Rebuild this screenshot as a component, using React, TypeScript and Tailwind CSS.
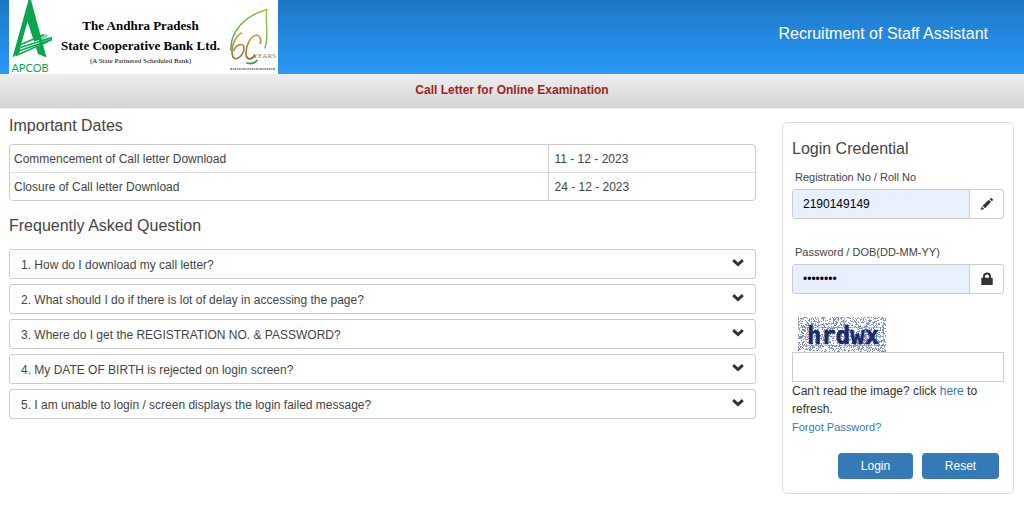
import { useState, type FormEvent, type ReactNode } from "react";

const importantDates = [
  { label: "Commencement of Call letter Download", date: "11 - 12 - 2023" },
  { label: "Closure of Call letter Download", date: "24 - 12 - 2023" },
];

const questions = [
  "1. How do I download my call letter?",
  "2. What should I do if there is lot of delay in accessing the page?",
  "3. Where do I get the REGISTRATION NO. & PASSWORD?",
  "4. My DATE OF BIRTH is rejected on login screen?",
  "5. I am unable to login / screen displays the login failed message?",
];

export default function App() {
  return (
    <div className="min-h-screen bg-white font-['Liberation_Sans',Arial,sans-serif] text-[12px] leading-[18px] text-[#444]">
      <Header />
      <div className="border-b border-[#f0f0f0] bg-linear-to-b from-[#eeeeee] to-[#d5d5d5] px-4 pt-[7px] pb-[9px] text-center">
        <h1 className="font-bold text-[#a02323]">Call Letter for Online Examination</h1>
      </div>
      <main className="flex items-start gap-[26px] pr-[10px] pl-[9px]">
        <div className="min-w-0 flex-1">
          <ImportantDates />
          <Faq />
        </div>
        <LoginPanel />
      </main>
    </div>
  );
}

function Header() {
  return (
    <header className="flex items-center justify-between bg-linear-to-b from-[#1e78c4] to-[#2999fa] pr-9 pl-[9px]">
      <div className="flex h-[74px] w-[269px] items-start bg-white">
        <Emblem />
        <div className="flex flex-1 flex-col items-center pt-4 font-['Liberation_Serif',serif] whitespace-nowrap text-black">
          <span className="text-[13px] leading-5 font-bold">The Andhra Pradesh</span>
          <span className="text-[13px] leading-5 font-bold">State Cooperative Bank Ltd.</span>
          <span className="text-[7px] leading-[10px]">(A State Partnered Scheduled Bank)</span>
        </div>
        <SixtyYears />
      </div>
      <p className="pb-1.5 text-[16px] leading-5 text-white">Recruitment of Staff Assistant</p>
    </header>
  );
}

function Emblem() {
  return (
    <svg className="h-[74px] w-[46px] shrink-0" viewBox="0 0 46 74" role="img" aria-label="APCOB">
      <path d="M19.500 0 H22 L37.500 57.500 L29 54 L18.500 21.500 L12 45 L10.500 53 L3.500 57.500 Z" fill="#0ba551" />
      <path d="M12 46 L30 40 L31 46 L11 53.500 Z" fill="#fff" />
      <g stroke="#0ba551" strokeWidth="1.400">
        <path d="M12 44.500 L35 34.500" />
        <path d="M11.500 47.500 L43 37.500" />
        <path d="M11 50.500 L43 39.500" />
        <path d="M7 55.500 L39 41.500" />
      </g>
      <path d="M31 36 L38 34 V37 L32 39.500 Z M31 39.500 L43 37 V40.500 L33 45 Z" fill="#0ba551" opacity="0.5" />
      <text
        x="21"
        y="72"
        textAnchor="middle"
        fontFamily="Lato, sans-serif"
        fontSize="11"
        fill="#0ba551"
      >
        APCOB
      </text>
    </svg>
  );
}

function SixtyYears() {
  return (
    <svg className="h-[74px] w-[52px] shrink-0" viewBox="0 0 52 74" role="img" aria-label="60 years">
      <defs>
        <linearGradient id="leaf" gradientUnits="userSpaceOnUse" x1="5" y1="60" x2="41" y2="10">
          <stop offset="0" stopColor="#2f9a5c" />
          <stop offset="1" stopColor="#9cc53c" />
        </linearGradient>
        <linearGradient id="gold" gradientUnits="userSpaceOnUse" x1="0" y1="32" x2="0" y2="60">
          <stop offset="0" stopColor="#d9a441" />
          <stop offset="1" stopColor="#8f6a34" />
        </linearGradient>
      </defs>
      <g fill="none" stroke="url(#leaf)" strokeLinecap="round">
        <path d="M5 50 C4 32 18 16 41 9.500" strokeWidth="1.400" />
        <path d="M41 9.500 C38 21 44 32 39 48" strokeWidth="1.300" />
        <path d="M21 63 C25 64 29 63 31 60.500" strokeWidth="1.800" />
      </g>
      <g fill="none" stroke="url(#gold)">
        <path d="M16 32.500 C8 37 4 50 7 57 C10 62 18 55 18 48 C18 43 11 43 7.500 51" strokeWidth="1.600" />
        <path d="M34 44 C36 39 33 34 29 35.500 C24 37 20 46 20 53 C20 60 25 61 29 55" strokeWidth="1.700" />
      </g>
      <text x="27" y="58" fontFamily="Liberation Serif, serif" fontSize="7" fill="#8a7a55">
        YEARS
      </text>
      <path d="M4 69 H49" stroke="#777" strokeWidth="1.600" strokeDasharray="2 0.600 1.200 0.500" />
    </svg>
  );
}

function SectionTitle({ children }: { children: ReactNode }) {
  return <h2 className="text-[16px] leading-[18px]">{children}</h2>;
}

function ImportantDates() {
  return (
    <section className="pt-2">
      <SectionTitle>Important Dates</SectionTitle>
      <div className="mt-[9px] overflow-hidden rounded border border-[#ccc]">
        <table className="w-full border-collapse">
          <tbody>
            {importantDates.map(({ label, date }) => (
              <tr key={label} className="border-t border-[#ddd] first:border-t-0">
                <th scope="row" className="px-1 pt-[5px] pb-1 text-left font-normal">
                  {label}
                </th>
                <td className="w-[207px] border-l border-[#ccc] px-1.5 pt-[5px] pb-1">{date}</td>
              </tr>
            ))}
          </tbody>
        </table>
      </div>
    </section>
  );
}

function Faq() {
  const [selected, setSelected] = useState<string | null>(null);

  return (
    <section className="pt-4">
      <SectionTitle>Frequently Asked Question</SectionTitle>
      <div className="mt-[14px] flex flex-col gap-[5px]">
        {questions.map((question) => (
          <button
            key={question}
            type="button"
            aria-expanded={selected === question}
            onClick={() => setSelected(selected === question ? null : question)}
            className="flex w-full items-start justify-between rounded-[3px] border border-[#ccc] px-[11px] pt-1.5 pb-1 text-left"
          >
            <span>{question}</span>
            <ChevronDown />
          </button>
        ))}
      </div>
    </section>
  );
}

function ChevronDown() {
  return (
    <svg className="mt-[3px] h-2 w-3" viewBox="0 0 12 8" aria-hidden="true">
      <path d="M1.200 1.200 L6 5.500 L10.800 1.200" fill="none" stroke="#333" strokeWidth="3" />
    </svg>
  );
}

function LoginPanel() {
  const [regNo, setRegNo] = useState("2190149149");
  const [password, setPassword] = useState("11121998");
  const [captcha, setCaptcha] = useState("");

  function handleSubmit(e: FormEvent) {
    e.preventDefault();
  }

  function reset() {
    setRegNo("");
    setPassword("");
    setCaptcha("");
  }

  return (
    <form
      onSubmit={handleSubmit}
      className="mt-[13px] w-[232px] shrink-0 rounded-[5px] border border-[#ddd] px-[9px] pt-[17px] pb-[14px]"
    >
      <SectionTitle>Login Credential</SectionTitle>
      <div className="flex flex-col gap-[14px]">
        <Field id="regno" label="Registration No / Roll No" type="text" value={regNo} onChange={setRegNo}>
          <PencilIcon />
        </Field>
        <Field id="password" label="Password / DOB(DD-MM-YY)" type="password" value={password} onChange={setPassword}>
          <LockIcon />
        </Field>
      </div>
      <div className="mt-[23px] pl-1.5">
        <CaptchaImage />
      </div>
      <input
        type="text"
        aria-label="Captcha"
        value={captcha}
        onChange={(e) => setCaptcha(e.target.value)}
        className="block h-[30px] w-full border border-[#ccc] px-2"
      />
      <p className="text-[#333]">
        Can't read the image? click{" "}
        <a href="#refresh" className="text-[#337ab7]">
          here
        </a>{" "}
        to refresh.
      </p>
      <a href="#forgot" className="block text-[11px] text-[#337ab7]">
        Forgot Password?
      </a>
      <div className="mt-[17px] flex justify-end gap-[9px] pr-[5px]">
        <button type="submit" className="w-[75px] rounded bg-[#337ab7] py-1 text-white">
          Login
        </button>
        <button type="button" onClick={reset} className="w-[77px] rounded bg-[#337ab7] py-1 text-white">
          Reset
        </button>
      </div>
    </form>
  );
}

function Field({
  id,
  label,
  type,
  value,
  onChange,
  children,
}: {
  id: string;
  label: string;
  type: string;
  value: string;
  onChange: (value: string) => void;
  children: ReactNode;
}) {
  return (
    <div className="pt-[10px]">
      <label htmlFor={id} className="block pl-[3px] text-[11px] leading-[18px]">
        {label}
      </label>
      <div className="mt-[3px] flex h-[30px] overflow-hidden rounded-[3px] border border-[#ccc]">
        <input
          id={id}
          type={type}
          value={value}
          onChange={(e) => onChange(e.target.value)}
          className="min-w-0 flex-1 bg-[#e8f0fe] px-[10px] text-[12px] text-black"
        />
        <span className="flex w-[34px] items-center justify-center border-l border-[#ccc]">{children}</span>
      </div>
    </div>
  );
}

function PencilIcon() {
  return (
    <svg className="h-[14px] w-[14px]" viewBox="0 0 14 14" fill="#333" aria-hidden="true">
      <path d="M0.500 13 L1.800 9.600 L4.200 12 Z" />
      <path d="M2.500 8.800 L8.900 2.800 L11 5.100 L5 11.300 Z" />
      <path d="M9.700 2 L10.600 1.200 Q11.200 0.800 11.700 1.300 L12.700 2.300 Q13.200 2.900 12.700 3.400 L11.800 4.300 Z" />
    </svg>
  );
}

function LockIcon() {
  return (
    <svg className="h-[14px] w-[14px]" viewBox="0 0 14 14" aria-hidden="true">
      <path d="M4 7 V4 Q4 1.500 7 1.500 Q10 1.500 10 4 V7" fill="none" stroke="#333" strokeWidth="1.900" />
      <rect x="1.300" y="5.800" width="11.400" height="7.200" rx="0.600" fill="#333" />
    </svg>
  );
}

// Speckle is seeded so that it stays put between renders
function speckle(count: number, width: number, height: number) {
  let seed = 7;
  const next = () => {
    seed = (seed * 16807) % 2147483647;
    return seed / 2147483647;
  };
  let path = "";
  for (let i = 0; i < count; i++) {
    path += `M${Math.floor(next() * width)} ${Math.floor(next() * height)}h1v1h-1z`;
  }
  return path;
}

const noise = speckle(1350, 88, 35);

function CaptchaImage() {
  return (
    <svg className="block h-[35px] w-[89px]" viewBox="0 0 89 35" role="img" aria-label="Captcha image">
      <path d={noise} fill="#4a5ea8" opacity="0.7" />
      <path
        d="M2 10.500 H86 M0 19.500 H84 M4 28.500 H88 M20.500 2 V33 M46.500 0 V34 M68.500 3 V32 M85.500 5 V30"
        stroke="#7482bd"
        opacity="0.5"
      />
      <text
        x="45"
        y="27"
        textAnchor="middle"
        fontFamily="DejaVu Sans Mono, monospace"
        fontSize="24"
        fontWeight="700"
        fill="#1a2a6c"
        stroke="#1a2a6c"
        strokeWidth="0.500"
      >
        hrdwx
      </text>
    </svg>
  );
}
